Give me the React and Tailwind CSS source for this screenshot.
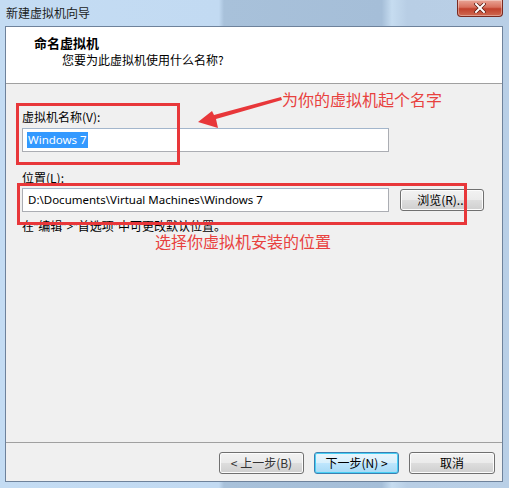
export default function App() {
  const ui = { fontFamily: '"Noto Sans", "Noto Sans CJK SC", sans-serif' };
  const cjk = { fontFamily: '"Noto Sans CJK SC", "Noto Sans", sans-serif' };

  return (
    <div
      className="relative w-[509px] h-[488px] overflow-hidden flex flex-col bg-[linear-gradient(90deg,#c4dcf3_0%,#c2daf2_43%,#a8c1da_44%,#a5bed8_75%,#c6dcf0_77%,#b8cee5_80%,#b9cfe6_100%)] text-[12px] text-black"
      style={ui}
    >
      {/* title bar */}
      <div className="h-[26px] flex items-start justify-between shrink-0">
        <div className="pl-[6px] pt-[5px] leading-[16px] text-[12px] text-[#1b1b1b]" style={cjk}>
          新建虚拟机向导
        </div>
        <div className="mr-[6px] w-[46px] h-[17px] rounded-b-[4px] border border-t-0 border-[#7a2a20] bg-[linear-gradient(180deg,#e9a596_0%,#d8705d_45%,#c1412c_55%,#cf6a52_100%)] flex items-center justify-center shadow-[inset_0_0_0_1px_rgba(255,255,255,0.35)]">
          <svg width="12" height="10" viewBox="0 0 12 10">
            <path d="M2 1 L10 9 M10 1 L2 9" stroke="#5a1a10" strokeWidth="3.4" strokeLinecap="square" />
            <path d="M2 1 L10 9 M10 1 L2 9" stroke="#ffffff" strokeWidth="2" strokeLinecap="square" />
          </svg>
        </div>
      </div>

      {/* client area */}
      <div className="ml-[5px] mr-[6px] mb-[6px] flex-1 flex flex-col border border-[#6e829b] bg-[#f0f0f0]">
        {/* header */}
        <div className="h-[57px] shrink-0 bg-white border-b border-[#a0a0a0] flex flex-col" style={cjk}>
          <div className="pl-[28px] pt-[7px] leading-[17px] text-[13px] font-bold">命名虚拟机</div>
          <div className="pl-[56px] pt-[1px] leading-[16px] text-[12px]">您要为此虚拟机使用什么名称?</div>
        </div>

        {/* body */}
        <div className="flex-1 flex flex-col pl-[16px] pt-[25px]">
          <div className="leading-[16px]" style={cjk}>虚拟机名称(V):</div>
          <div className="mt-[3px] w-[367px] h-[24px] border border-[#abadb3] border-t-[#a3b6cc] bg-white flex items-center pl-[4px]">
            <span className="bg-[#3399ff] text-white leading-[16px] px-[1px] text-[11.5px]">Windows 7</span>
          </div>

          <div className="mt-[18px] leading-[16px]" style={cjk}>位置(L):</div>
          <div className="mt-[2px] flex items-center gap-[11px]">
            <div className="w-[367px] h-[24px] border border-[#abadb3] border-t-[#a3b6cc] bg-white flex items-center pl-[5px] text-[11.5px]">
              D:\Documents\Virtual Machines\Windows 7
            </div>
            <button className="w-[84px] h-[22px] rounded-[3px] border border-[#707070] bg-[linear-gradient(180deg,#f2f2f2_0%,#ebebeb_48%,#dddddd_52%,#cfcfcf_100%)] text-[12px] leading-[16px] shadow-[inset_0_0_0_1px_#fcfcfc]" style={cjk}>
              浏览(R)...
            </button>
          </div>
          <div className="mt-[8px] leading-[14px]" style={ui}>在“编辑”&gt;“首选项”中可更改默认位置。</div>
        </div>

        {/* footer */}
        <div className="h-[39px] shrink-0 border-t border-[#a0a0a0] flex items-start justify-end gap-[10px] pt-[9px] pr-[7px]" style={cjk}>
          <button className="w-[85px] h-[22px] rounded-[3px] border border-[#707070] bg-[linear-gradient(180deg,#f2f2f2_0%,#ebebeb_48%,#dddddd_52%,#cfcfcf_100%)] text-[12px] leading-[16px] text-[#333] shadow-[inset_0_0_0_1px_#fcfcfc]">
              &lt; 上一步(B)
          </button>
          <button className="w-[85px] h-[22px] rounded-[3px] border border-[#3c7fb1] bg-[linear-gradient(180deg,#eaf6fd_0%,#d9f0fc_48%,#bee6fd_52%,#a7d9f5_100%)] text-[12px] leading-[16px] shadow-[inset_0_0_0_1px_#48d0f5]">
              下一步(N) &gt;
          </button>
          <button className="w-[86px] h-[22px] rounded-[3px] border border-[#707070] bg-[linear-gradient(180deg,#f2f2f2_0%,#ebebeb_48%,#dddddd_52%,#cfcfcf_100%)] text-[12px] leading-[16px] shadow-[inset_0_0_0_1px_#fcfcfc]">
              取消
          </button>
        </div>
      </div>

      {/* annotation overlays */}
      <div className="absolute left-[16px] top-[103px] w-[164px] h-[62px] border-[3px] border-[#e8373a]" />
      <div className="absolute left-[17px] top-[183px] w-[450px] h-[42px] border-[3px] border-[#e8373a]" />
      <div className="absolute left-[282px] top-[89px] text-[16px] leading-[20px] text-[#e8413e]" style={cjk}>
        为你的虚拟机起个名字
      </div>
      <div className="absolute left-[155px] top-[233px] text-[16px] leading-[16px] text-[#e8413e]" style={cjk}>
        选择你虚拟机安装的位置
      </div>
      <svg className="absolute left-0 top-0" width="509" height="488" viewBox="0 0 509 488">
        <polygon
          points="198,122 212,111 214,115 281,97 282,100 216,119 218,128"
          fill="#e8373a"
        />
      </svg>
    </div>
  );
}
